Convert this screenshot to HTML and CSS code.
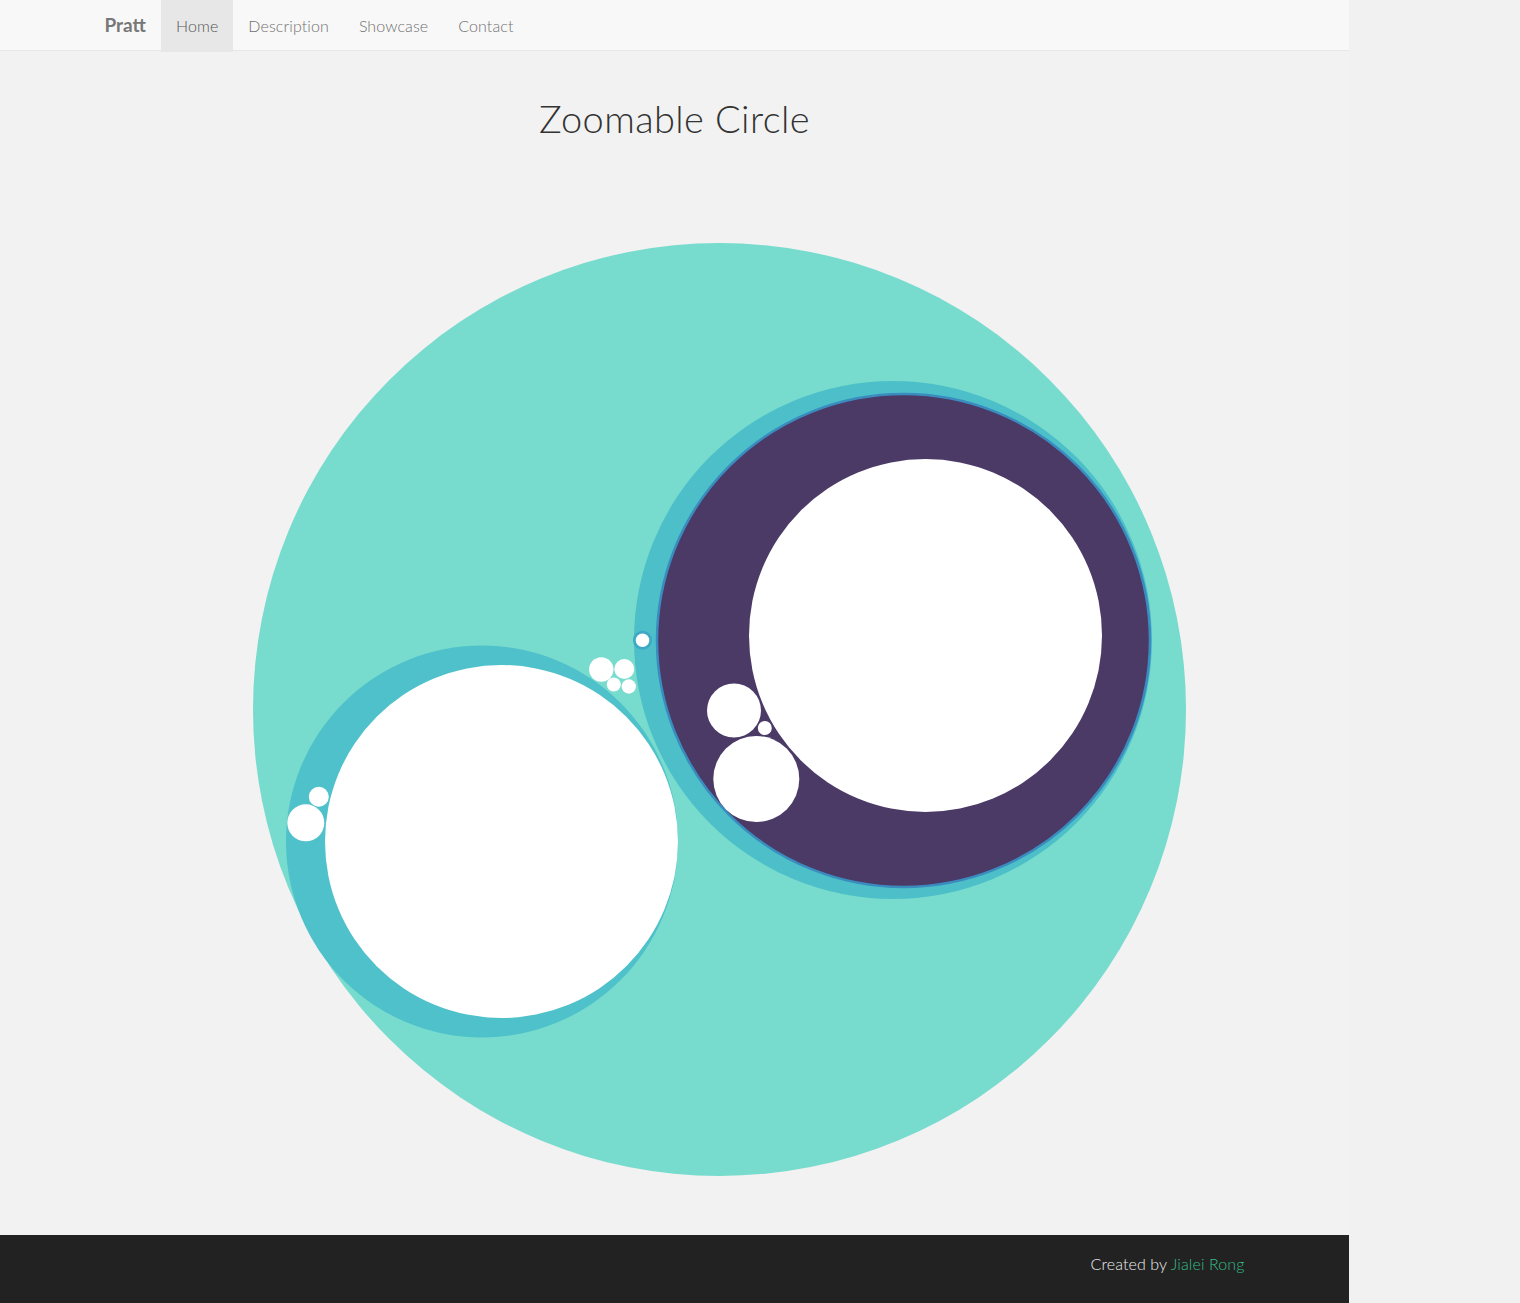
FILE: index.html
```html
<!DOCTYPE html>
<html>
<head>
<meta charset="utf-8">
<title>Zoomable Circle</title>
<link rel="stylesheet" href="styles.css">
</head>
<body>
<div class="page">
  <nav class="navbar">
    <div class="container nav-inner">
      <a class="brand" href="#">Pratt</a>
      <ul class="nav">
        <li class="active"><a href="#">Home</a></li>
        <li><a href="#">Description</a></li>
        <li><a href="#">Showcase</a></li>
        <li><a href="#">Contact</a></li>
      </ul>
    </div>
  </nav>
  <main class="main">
    <h1 class="title">Zoomable Circle</h1>
    <svg class="chart" viewBox="0 200 1349 1035" width="1349" height="1035">
      <circle cx="719.5" cy="709.5" r="466.5" fill="#77dbcd"/>
      <circle cx="482" cy="841.5" r="196" fill="#4fc1ca"/>
      <circle cx="501.5" cy="841.5" r="176.5" fill="#ffffff"/>
      <circle cx="305.8" cy="822.8" r="18.5" fill="#ffffff"/>
      <circle cx="318.8" cy="796.8" r="10" fill="#ffffff"/>
      <circle cx="893" cy="640" r="259" fill="#4dbfc9"/>
      <circle cx="903.5" cy="640.5" r="246.5" fill="#4b3966" stroke="#3a8cbf" stroke-width="2.5"/>
      <circle cx="925.5" cy="635.5" r="176.5" fill="#ffffff"/>
      <circle cx="734" cy="710.5" r="27" fill="#ffffff"/>
      <circle cx="756.3" cy="779" r="43" fill="#ffffff"/>
      <circle cx="764.8" cy="728" r="7" fill="#ffffff"/>
      <circle cx="642.5" cy="640.3" r="9.5" fill="#3ea8c6"/>
      <circle cx="642.5" cy="640.3" r="6.8" fill="#ffffff"/>
      <circle cx="601.3" cy="669.5" r="12.2" fill="#ffffff"/>
      <circle cx="624.3" cy="669" r="10" fill="#ffffff"/>
      <circle cx="613.8" cy="684.5" r="7" fill="#ffffff"/>
      <circle cx="628.8" cy="686.5" r="7.2" fill="#ffffff"/>
    </svg>
  </main>
  <footer class="footer">
    <div class="container footer-inner">
      <p class="credit">Created by <a href="#">Jialei Rong</a></p>
    </div>
  </footer>
</div>
</body>
</html>
```

FILE: styles.css
```css
* { box-sizing: border-box; }
html, body {
  margin: 0;
  padding: 0;
  background: #f1f1f1;
}
body {
  font-family: "Lato", "Liberation Sans", sans-serif;
  font-weight: 300;
  color: #333;
}
.page {
  width: 1349px;
  background: #f2f2f2;
}
.container {
  width: 1170px;
  margin: 0 auto;
  padding: 0 15px;
}
.navbar {
  height: 51px;
  background: #f8f8f8;
  border-bottom: 1px solid #e7e7e7;
}
.nav-inner {
  display: flex;
  align-items: stretch;
  height: 50px;
}
.brand {
  display: block;
  margin-left: -15px;
  padding: 0 15px;
  line-height: 50px;
  font-size: 19px;
  letter-spacing: 0;
  font-weight: 700;
  color: #777;
  text-decoration: none;
}
.nav {
  display: flex;
  list-style: none;
  margin: 0;
  padding: 0;
}
.nav li a {
  display: block;
  padding: 0 15px;
  line-height: 52px;
  font-size: 16px;
  letter-spacing: 0.1px;
  font-weight: 300;
  color: #707070;
  text-decoration: none;
}
.nav li.active a {
  background: #e7e7e7;
  color: #555;
}
.main {
  display: flex;
  flex-direction: column;
  align-items: stretch;
}
.title {
  margin: 0;
  height: 149px;
  padding-top: 45px;
  text-align: center;
  font-family: "Lato", sans-serif;
  font-weight: 300;
  font-size: 38px;
  line-height: 44px;
  letter-spacing: 0.4px;
  color: #333;
}
.chart {
  display: block;
}
.footer {
  height: 68px;
  background: #222222;
}
.footer-inner {
  display: flex;
  justify-content: flex-end;
}
.credit {
  margin: 0;
  padding-top: 18px;
  font-size: 16px;
  letter-spacing: 0.1px;
  line-height: 22px;
  font-weight: 300;
  color: #eeeeee;
}
.credit a {
  color: #33bd86;
  text-decoration: none;
}
```
